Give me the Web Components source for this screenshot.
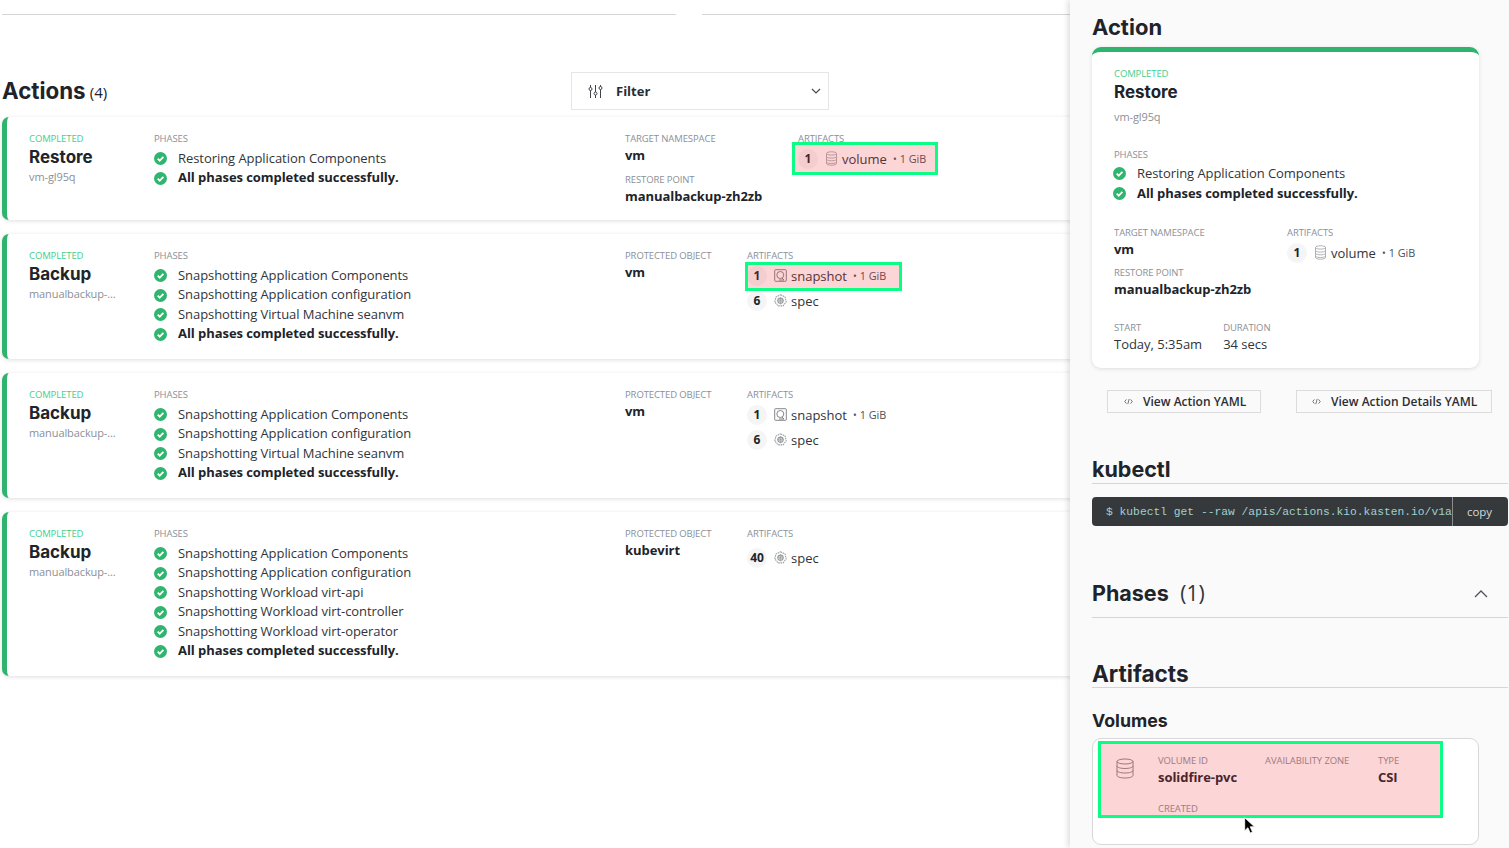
<!DOCTYPE html>
<html>
<head>
<meta charset="utf-8">
<title>Actions</title>
<style>
  html, body { margin: 0; height: 100%; overflow: hidden; background: #fff; }
  body { font-family: "Open Sans", sans-serif; font-size: 13px; color: #20242a; }
</style>
</head>
<body>
<app-page>
  <actions-list></actions-list>
  <detail-panel></detail-panel>
</app-page>
<script>
// icons used in more than one element
const ICON = {
  volume: `<svg viewBox="0 0 13 15" fill="none" stroke="#9a9da2" stroke-width=".8"><path d="M1.500 2.600C1.500 1.500 3.500.8 6.500.8s5 .7 5 1.800v9.800c0 1.100-2 1.800-5 1.800s-5-.7-5-1.800z"/><path d="M1.500 2.800c1 1 3 1.300 5 1.300s4-.3 5-1.300M1.500 5.800c1 1 3 1.300 5 1.300s4-.3 5-1.300M1.500 8.500c1 1 3 1.300 5 1.300s4-.3 5-1.300M1.500 11.200c1 1 3 1.300 5 1.300s4-.3 5-1.300"/></svg>`,
  snapshot: `<svg viewBox="0 0 13 13" fill="none" stroke="#76797e" stroke-width=".9"><rect x=".7" y=".7" width="11.600" height="11.600" rx=".8"/><circle cx="6.300" cy="6" r="3.500"/><path d="M8 9l2 2H5"/></svg>`,
  spec: `<svg viewBox="0 0 13 13" fill="none" stroke="#9a9da0" stroke-width="1.100"><path d="M6.500 .8l4.600 2.300 1.100 4.800-3.200 4H4l-3.200-4 1.100-4.800z" stroke-dasharray="1.600 .7"/><circle cx="6.500" cy="6.700" r="2.600"/><path d="M6.500 3v7.400M3 6.700h7M4 4.200l5 5M9 4.200l-5 5" stroke-width=".7"/></svg>`,
  check: `<svg viewBox="0 0 13 13"><circle cx="6.500" cy="6.500" r="6.500" fill="#2fb56e"/><path d="M3.700 6.700l2 2 3.700-3.900" fill="none" stroke="#fff" stroke-width="1.700"/></svg>`,
  code: `<svg viewBox="0 0 10 8" fill="none" stroke="#50555c" stroke-width=".9"><path d="M2.600 1.600L.7 4l1.900 2.400M7.400 1.600L9.300 4 7.400 6.400M5.800 1L4.200 7"/></svg>`
};

function define(name, css, html) {
  customElements.define(name, class extends HTMLElement {
    constructor() {
      super();
      const shadowRoot = this.attachShadow({mode: 'open'});
      shadowRoot.innerHTML = `<style>${css}</style>${typeof html == 'function' ? html(this) : html}`;
    }
  });
}

const attr = (el, n, d = '') => el.getAttribute(n) || d;

define('app-page', `
  :host { display: flex; width: 1509px; height: 848px; overflow: hidden; }
`, `<slot></slot>`);

define('field-label', `
  :host { display: block; font: 400 9.5px/14px "Open Sans", sans-serif; margin-bottom: -2px; color: #8b9098; text-transform: uppercase; letter-spacing: -.1px; white-space: nowrap; }
  :host([green]) { color: #44cf8d; }
`, `<slot></slot>`);

define('phase-row', `
  :host { display: flex; align-items: center; gap: 11px; height: 19.56px; font: 400 13px/19.5px "Open Sans", sans-serif; color: #30353b; white-space: nowrap; letter-spacing: -.06px; }
  :host([done]) { font-weight: 700; color: #20242a; }
  .i { width: 13px; height: 13px; display: block; flex: none; }
  .i svg { display: block; }
`, `<span class="i">${ICON.check}</span><slot></slot>`);

define('artifact-chip', `
  :host { display: flex; align-items: center; height: 25px; position: relative; margin-top: 2px; font: 400 13px/20px "Open Sans", sans-serif; color: #30353b; white-space: nowrap; }
  :host([next]) { margin-top: 0; }
  .n { width: 20px; height: 20px; border-radius: 50%; background: #f5f5f5; font-weight: 700; font-size: 12px; text-align: center; flex: none; color: #20242a; }
  .i { width: 13px; height: 15px; margin: 0 4px 0 7px; flex: none; display: flex; align-items: center; }
  .i svg { display: block; width: 13px; }
  .s { font-size: 10.8px; color: #4c5157; margin-left: 6px; }
  .s::before { content: "\\2022"; font-size: 10px; margin-right: 3px; }
`, el => `<span class="n">${attr(el, 'count')}</span><span class="i">${ICON[attr(el, 'kind')]}</span><slot></slot>${attr(el, 'size') ? `<span class="s">${attr(el, 'size')}</span>` : ''}`);

// the pink box with the green frame that lies over whatever it marks
define('mark-box', `
  :host { position: absolute; box-sizing: border-box; border: 3px solid #0bfd85; background: rgba(240,45,50,.2); pointer-events: none; }
`, ``);

define('action-card', `
  :host { display: grid; grid-template-columns: 125px 471px var(--third, 122px) 1fr; box-sizing: border-box; border-left: 5px solid #2fb36d; border-radius: 7px; background: #fff; box-shadow: 0 1px 4px rgba(0,0,0,.13); padding: 15px 0 0 22px; position: relative; flex: none; }
  .name { font: 700 17px/22px Inter, sans-serif; color: #20242a; margin-top: 2px; }
  .sub { font-size: 11px; line-height: 16px; color: #8b9098; letter-spacing: -.1px; margin-top: 1px; }
  .phases { margin-top: 4.7px; }
`, el => `
  <div>
    <field-label green>${attr(el, 'state')}</field-label>
    <div class="name">${attr(el, 'name')}</div>
    <div class="sub">${attr(el, 'sub')}</div>
  </div>
  <div><field-label>Phases</field-label><div class="phases"><slot name="phases"></slot></div></div>
  <div><slot name="meta"></slot></div>
  <div><field-label>Artifacts</field-label><slot name="artifacts"></slot></div>
  <slot name="mark"></slot>
`);

define('meta-value', `
  :host { display: block; font: 700 13px/20px "Open Sans", sans-serif; color: #20242a; margin-top: 1px; white-space: nowrap; letter-spacing: -.05px; }
  :host([plain]) { font-weight: 400; color: #30353b; letter-spacing: -.02px; }
`, `<slot></slot>`);

define('filter-box', `
  :host { display: flex; align-items: center; box-sizing: border-box; width: 258px; height: 38px; border: 1px solid #e6e6e6; background: #fff; padding: 0 7px 0 16px; font: 700 13px "Open Sans", sans-serif; color: #2a2e34; }
  svg { display: block; flex: none; }
  span { flex: 1; margin-left: 13px; }
`, `<svg width="15" height="15" viewBox="0 0 15 15" fill="none" stroke="#40454b" stroke-width="1"><path d="M2.500 1v2.500M2.500 6.500V14M7.500 1v7M7.500 11v3M12.500 1v1.500M12.500 5.500V14"/><circle cx="2.500" cy="5" r="1.500"/><circle cx="7.500" cy="9.500" r="1.500"/><circle cx="12.500" cy="4" r="1.500"/></svg><span><slot></slot></span>
<svg width="10" height="6" viewBox="0 0 10 6" fill="none" stroke="#40454b" stroke-width="1.100"><path d="M1 1l4 4 4-4"/></svg>`);

define('actions-list', `
  :host { display: block; width: 1070px; flex: none; overflow: hidden; padding-left: 2px; box-sizing: border-box; }
  .rule { display: flex; justify-content: space-between; margin-top: 14px; height: 1px; }
  .rule i { display: block; background: #d5d5d5; }
  .rule i:first-child { width: 674px; }
  .rule i:last-child { width: 368px; }
  .head { display: flex; align-items: center; margin-top: 57px; height: 38px; margin-bottom: 7px; }
  h1 { margin: 0; width: 569px; font: 700 22.3px/38px Inter, sans-serif; color: #20242a; }
  h1 small { font: 400 15px/30px "Open Sans", sans-serif; margin-left: -1px; vertical-align: 1px; }
  .cards { display: flex; flex-direction: column; gap: 14px; margin-right: -12px; }
`, `
  <div class="rule"><i></i><i></i></div>
  <div class="head"><h1>Actions <small>(4)</small></h1><filter-box>Filter</filter-box></div>
  <div class="cards">
    <action-card state="Completed" name="Restore" sub="vm-gl95q" style="height:103px;--third:173px">
      <phase-row slot="phases">Restoring Application Components</phase-row>
      <phase-row slot="phases" done>All phases completed successfully.</phase-row>
      <div slot="meta">
        <field-label>Target namespace</field-label><meta-value>vm</meta-value>
        <field-label style="margin-top:8px">Restore point</field-label><meta-value>manualbackup-zh2zb</meta-value>
      </div>
      <artifact-chip slot="artifacts" count="1" kind="volume" size="1 GiB">volume</artifact-chip>
      <mark-box slot="mark" style="left:785px;top:25px;width:146px;height:33px"></mark-box>
    </action-card>
    <action-card state="Completed" name="Backup" sub="manualbackup-..." style="height:125px">
      <phase-row slot="phases">Snapshotting Application Components</phase-row>
      <phase-row slot="phases">Snapshotting Application configuration</phase-row>
      <phase-row slot="phases">Snapshotting Virtual Machine seanvm</phase-row>
      <phase-row slot="phases" done>All phases completed successfully.</phase-row>
      <div slot="meta"><field-label>Protected object</field-label><meta-value>vm</meta-value></div>
      <artifact-chip slot="artifacts" count="1" kind="snapshot" size="1 GiB">snapshot</artifact-chip>
      <artifact-chip slot="artifacts" count="6" kind="spec" next>spec</artifact-chip>
      <mark-box slot="mark" style="left:738px;top:28px;width:157px;height:29px"></mark-box>
    </action-card>
    <action-card state="Completed" name="Backup" sub="manualbackup-..." style="height:125px">
      <phase-row slot="phases">Snapshotting Application Components</phase-row>
      <phase-row slot="phases">Snapshotting Application configuration</phase-row>
      <phase-row slot="phases">Snapshotting Virtual Machine seanvm</phase-row>
      <phase-row slot="phases" done>All phases completed successfully.</phase-row>
      <div slot="meta"><field-label>Protected object</field-label><meta-value>vm</meta-value></div>
      <artifact-chip slot="artifacts" count="1" kind="snapshot" size="1 GiB">snapshot</artifact-chip>
      <artifact-chip slot="artifacts" count="6" kind="spec" next>spec</artifact-chip>
    </action-card>
    <action-card state="Completed" name="Backup" sub="manualbackup-..." style="height:164px">
      <phase-row slot="phases">Snapshotting Application Components</phase-row>
      <phase-row slot="phases">Snapshotting Application configuration</phase-row>
      <phase-row slot="phases">Snapshotting Workload virt-api</phase-row>
      <phase-row slot="phases">Snapshotting Workload virt-controller</phase-row>
      <phase-row slot="phases">Snapshotting Workload virt-operator</phase-row>
      <phase-row slot="phases" done>All phases completed successfully.</phase-row>
      <div slot="meta"><field-label>Protected object</field-label><meta-value>kubevirt</meta-value></div>
      <artifact-chip slot="artifacts" count="40" kind="spec" style="margin-top:6px">spec</artifact-chip>
    </action-card>
  </div>
`);

define('section-head', `
  :host { display: flex; align-items: flex-start; justify-content: space-between; box-sizing: border-box; border-bottom: 1px solid #d5d5d5; font: 700 21.5px/28px Inter, sans-serif; color: #20242a; }
  .c { font: 400 21px/24px "Open Sans", sans-serif; margin-left: 11.5px; color: #30353b; }
  svg { display: block; margin: 9px 20px 0 0; }
`, el => `<div><slot></slot>${attr(el, 'count') ? `<span class="c">${attr(el, 'count')}</span>` : ''}</div>${el.hasAttribute('open') ? `<svg width="14" height="8" viewBox="0 0 14 8" fill="none" stroke="#50555c" stroke-width="1.300"><path d="M1 7l6-6 6 6"/></svg>` : ''}`);

define('yaml-button', `
  :host { display: flex; align-items: center; box-sizing: border-box; height: 23px; border: 1px solid #dcdcdc; font: 600 12px/21px "Open Sans", sans-serif; color: #2a2e34; white-space: nowrap; }
  svg { width: 9px; height: 7px; display: block; margin: 0 10px 0 var(--pad, 16px); flex: none; }
`, `${ICON.code}<slot></slot>`);

define('kubectl-bar', `
  :host { display: flex; box-sizing: border-box; height: 29px; border-radius: 4px; background: #36393b; overflow: hidden; }
  code { display: block; width: 360px; flex: none; box-sizing: border-box; padding-left: 14px; white-space: pre; font: 400 11.3px/30px "Liberation Mono", monospace; color: #9fd0d0; }
  .copy { flex: 1; border-left: 1px solid #8a8d8f; padding-right: 2px; font: 400 11.5px/30px "Open Sans", sans-serif; color: #d8d8d8; text-align: center; }
`, `<code><slot></slot></code><div class="copy">copy</div>`);

define('volume-card', `
  :host { display: block; position: relative; box-sizing: border-box; width: 387px; height: 107px; margin-top: 6px; border: 1px solid #d8d8d8; border-radius: 9px; background: #fff; }
  svg { position: absolute; left: 23px; top: 19px; width: 18px; height: 21px; }
  .row { display: grid; grid-template-columns: 107px 113px auto; padding: 15px 0 0 65px; }
  .bottom { padding: 15px 0 0 65px; }
`, `<svg viewBox="0 0 18 21" fill="none" stroke="#7a7d82" stroke-width=".9"><ellipse cx="9" cy="3.500" rx="8" ry="2.500"/><path d="M1 3.500v14c0 1.400 3.600 2.500 8 2.500s8-1.100 8-2.500v-14M1 8c0 1.400 3.600 2.500 8 2.500s8-1.100 8-2.500M1 12.500c0 1.400 3.600 2.500 8 2.500s8-1.100 8-2.500"/></svg>
  <div class="row">
    <div><field-label>Volume ID</field-label><meta-value>solidfire-pvc</meta-value></div>
    <div><field-label>Availability zone</field-label></div>
    <div><field-label>Type</field-label><meta-value>CSI</meta-value></div>
  </div>
  <div class="bottom"><field-label>Created</field-label></div>
  <slot></slot>`);

define('detail-panel', `
  :host { display: block; position: relative; z-index: 1; width: 439px; flex: none; box-sizing: border-box; height: 848px; background: #fafafa; box-shadow: -2px 0 6px rgba(0,0,0,.14); padding-left: 22px; overflow: hidden; }
  h2 { margin: 14px 0 0; font: 700 22px/26px Inter, sans-serif; color: #20242a; }
  .card { width: 387px; height: 321px; box-sizing: border-box; margin-top: 7px; border-top: 5px solid #2fb36d; border-radius: 9px; background: #fff; box-shadow: 0 1px 4px rgba(0,0,0,.12); padding: 15px 22px 0; }
  .name { font: 700 17px/22px Inter, sans-serif; color: #20242a; margin-top: 2px; }
  .sub { font-size: 11px; line-height: 16px; color: #8b9098; letter-spacing: -.1px; margin-top: 6px; }
  .phases { margin: 4px 0 0 -1px; }
  .two { display: grid; grid-template-columns: 173px 1fr; margin-top: 23px; }
  .times { display: flex; gap: 21px; margin-top: 22px; }
  .btns { display: flex; margin-top: 22px; }
  section-head.k { margin-top: 42px; height: 29px; width: 416px; }
  section-head.p { margin-top: 55px; height: 37px; width: 416px; line-height: 24px; }
  section-head.a { margin-top: 43px; height: 27px; width: 416px; line-height: 26px; font-size: 22.6px; }
  h3 { margin: 22px 0 0; font: 700 17.8px/22px Inter, sans-serif; color: #20242a; }
  kubectl-bar { width: 416px; margin-top: 13px; }
  .cursor { position: absolute; left: 174px; top: 817px; }
`, `
  <h2>Action</h2>
  <div class="card">
    <field-label green>Completed</field-label>
    <div class="name">Restore</div>
    <div class="sub">vm-gl95q</div>
    <field-label style="margin-top:23px">Phases</field-label>
    <div class="phases">
      <phase-row>Restoring Application Components</phase-row>
      <phase-row done>All phases completed successfully.</phase-row>
    </div>
    <div class="two">
      <div>
        <field-label>Target namespace</field-label><meta-value>vm</meta-value>
        <field-label style="margin-top:7px">Restore point</field-label><meta-value>manualbackup-zh2zb</meta-value>
      </div>
      <div><field-label>Artifacts</field-label><artifact-chip count="1" kind="volume" size="1 GiB">volume</artifact-chip></div>
    </div>
    <div class="times">
      <div><field-label>Start</field-label><meta-value plain>Today, 5:35am</meta-value></div>
      <div><field-label>Duration</field-label><meta-value plain>34 secs</meta-value></div>
    </div>
  </div>
  <div class="btns">
    <yaml-button style="width:154px;margin-left:15px">View Action YAML</yaml-button>
    <yaml-button style="width:196px;margin-left:35px;--pad:15px">View Action Details YAML</yaml-button>
  </div>
  <section-head class="k">kubectl</section-head>
  <kubectl-bar>$ kubectl get --raw /apis/actions.kio.kasten.io/v1a</kubectl-bar>
  <section-head class="p" count="(1)" open>Phases</section-head>
  <section-head class="a">Artifacts</section-head>
  <h3>Volumes</h3>
  <volume-card><mark-box style="left:5px;top:2px;width:345px;height:77px"></mark-box></volume-card>
  <svg class="cursor" width="12" height="17" viewBox="0 0 12 17"><path d="M.7 .7v13l3.200-3 2.300 5.300 2.300-1-2.300-5.200h4.300z" fill="#000" stroke="#fff" stroke-width=".8"/></svg>
`);
</script>
</body>
</html>
